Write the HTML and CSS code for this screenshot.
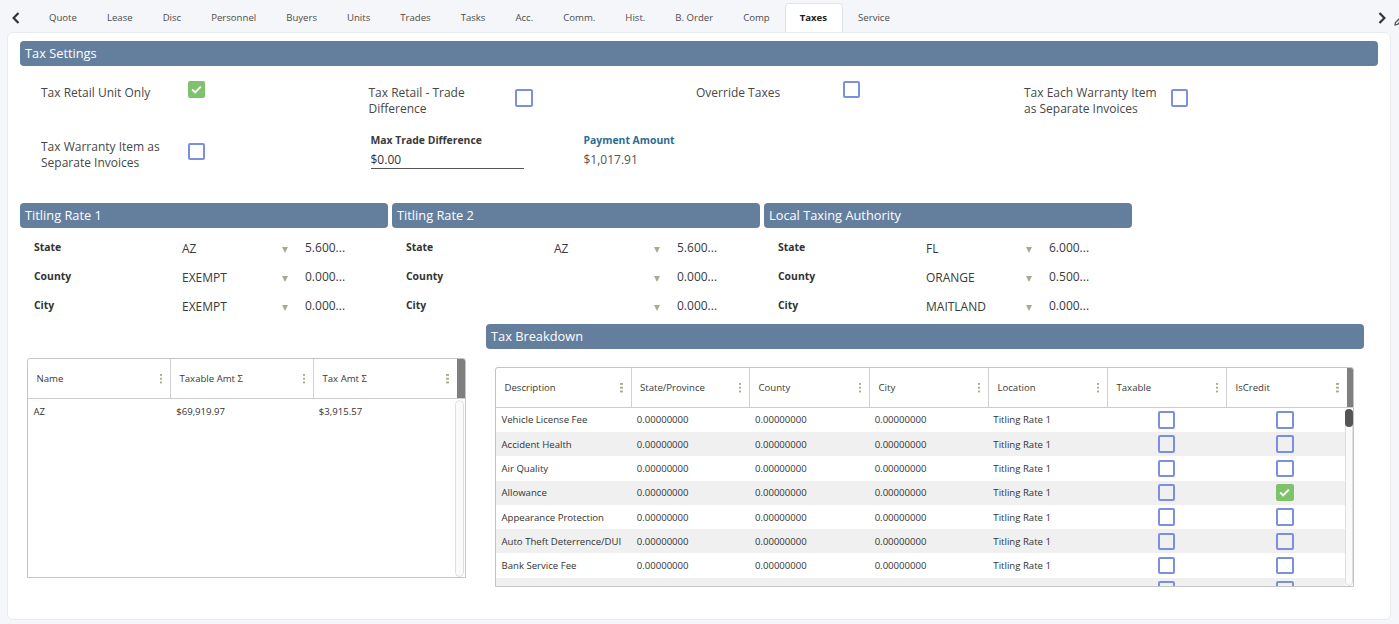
FILE: index.html
```html
<!DOCTYPE html>
<html>
<head>
<meta charset="utf-8">
<title>Taxes</title>
<link rel="stylesheet" href="styles.css">
</head>
<body>
<div class="page">
  <div class="tabbar">
    <div class="nav nav-left">
      <svg width="8" height="12" viewBox="0 0 8 12"><path d="M6.5 1 L1.6 6 L6.5 11" fill="none" stroke="#333" stroke-width="2.2"/></svg>
    </div>
    <div class="tabs">
      <div class="tab">Quote</div>
      <div class="tab">Lease</div>
      <div class="tab">Disc</div>
      <div class="tab">Personnel</div>
      <div class="tab">Buyers</div>
      <div class="tab">Units</div>
      <div class="tab">Trades</div>
      <div class="tab">Tasks</div>
      <div class="tab">Acc.</div>
      <div class="tab">Comm.</div>
      <div class="tab">Hist.</div>
      <div class="tab">B. Order</div>
      <div class="tab">Comp</div>
      <div class="tab active">Taxes</div>
      <div class="tab">Service</div>
    </div>
    <div class="nav nav-right">
      <svg class="chev" width="8" height="12" viewBox="0 0 8 12"><path d="M1.5 1 L6.4 6 L1.5 11" fill="none" stroke="#333" stroke-width="2.2"/></svg>
      <svg class="pencil" width="12" height="12" viewBox="0 0 12 12"><path d="M2 10 L2.5 7.5 L8 2 L10 4 L4.5 9.5 Z" fill="none" stroke="#555" stroke-width="1.3"/></svg>
    </div>
  </div>

  <div class="card">
    <div class="bar">Tax Settings</div>

    <div class="settings">
      <div class="setting">
        <div class="slabel">Tax Retail Unit Only</div>
        <span class="cb checked"><svg width="11" height="9" viewBox="0 0 11 9"><path d="M1.2 4.6 L4.2 7.4 L9.8 1.6" fill="none" stroke="#fff" stroke-width="2"/></svg></span>
      </div>
      <div class="setting">
        <div class="slabel">Tax Retail - Trade Difference</div>
        <span class="cb"></span>
      </div>
      <div class="setting">
        <div class="slabel">Override Taxes</div>
        <span class="cb"></span>
      </div>
      <div class="setting">
        <div class="slabel">Tax Each Warranty Item as Separate Invoices</div>
        <span class="cb"></span>
      </div>

      <div class="setting row2">
        <div class="slabel">Tax Warranty Item as Separate Invoices</div>
        <span class="cb"></span>
      </div>
      <div class="fields">
        <div class="field maxtrade">
          <div class="flabel">Max Trade Difference</div>
          <div class="finput">$0.00</div>
        </div>
        <div class="field">
          <div class="flabel blue">Payment Amount</div>
          <div class="fvalue">$1,017.91</div>
        </div>
      </div>
    </div>

    <div class="rates">
      <div class="rate">
        <div class="bar">Titling Rate 1</div>
        <div class="rrow"><span class="rl">State</span><span class="rv">AZ</span><span class="dd"></span><span class="rn">5.600...</span></div>
        <div class="rrow"><span class="rl">County</span><span class="rv">EXEMPT</span><span class="dd"></span><span class="rn">0.000...</span></div>
        <div class="rrow"><span class="rl">City</span><span class="rv">EXEMPT</span><span class="dd"></span><span class="rn">0.000...</span></div>
      </div>
      <div class="rate">
        <div class="bar">Titling Rate 2</div>
        <div class="rrow"><span class="rl">State</span><span class="rv">AZ</span><span class="dd"></span><span class="rn">5.600...</span></div>
        <div class="rrow"><span class="rl">County</span><span class="rv"></span><span class="dd"></span><span class="rn">0.000...</span></div>
        <div class="rrow"><span class="rl">City</span><span class="rv"></span><span class="dd"></span><span class="rn">0.000...</span></div>
      </div>
      <div class="rate">
        <div class="bar">Local Taxing Authority</div>
        <div class="rrow"><span class="rl">State</span><span class="rv">FL</span><span class="dd"></span><span class="rn">6.000...</span></div>
        <div class="rrow"><span class="rl">County</span><span class="rv">ORANGE</span><span class="dd"></span><span class="rn">0.500...</span></div>
        <div class="rrow"><span class="rl">City</span><span class="rv">MAITLAND</span><span class="dd"></span><span class="rn">0.000...</span></div>
      </div>
    </div>

    <div class="lower">
      <div class="leftcol">
        <div class="grid g-left">
          <div class="ghead">
            <div class="hc">Name<span class="kebab"></span></div>
            <div class="hc">Taxable Amt &Sigma;<span class="kebab"></span></div>
            <div class="hc">Tax Amt &Sigma;<span class="kebab"></span></div>
            <div class="hscroll"></div>
          </div>
          <div class="gbody">
            <div class="rows">
              <div class="row"><div class="c">AZ</div><div class="c">$69,919.97</div><div class="c">$3,915.57</div></div>
            </div>
            <div class="track"></div>
          </div>
        </div>
      </div>

      <div class="rightcol">
        <div class="bar">Tax Breakdown</div>
        <div class="grid g-right">
          <div class="ghead">
            <div class="hc">Description<span class="kebab"></span></div>
            <div class="hc">State/Province<span class="kebab"></span></div>
            <div class="hc">County<span class="kebab"></span></div>
            <div class="hc">City<span class="kebab"></span></div>
            <div class="hc">Location<span class="kebab"></span></div>
            <div class="hc">Taxable<span class="kebab"></span></div>
            <div class="hc">IsCredit<span class="kebab"></span></div>
            <div class="hscroll"></div>
          </div>
          <div class="gbody">
            <div class="rows">
              <div class="row"><div class="c">Vehicle License Fee</div><div class="c">0.00000000</div><div class="c">0.00000000</div><div class="c">0.00000000</div><div class="c">Titling Rate 1</div><div class="c ctr"><span class="cb"></span></div><div class="c ctr"><span class="cb"></span></div></div>
              <div class="row"><div class="c">Accident Health</div><div class="c">0.00000000</div><div class="c">0.00000000</div><div class="c">0.00000000</div><div class="c">Titling Rate 1</div><div class="c ctr"><span class="cb"></span></div><div class="c ctr"><span class="cb"></span></div></div>
              <div class="row"><div class="c">Air Quality</div><div class="c">0.00000000</div><div class="c">0.00000000</div><div class="c">0.00000000</div><div class="c">Titling Rate 1</div><div class="c ctr"><span class="cb"></span></div><div class="c ctr"><span class="cb"></span></div></div>
              <div class="row"><div class="c">Allowance</div><div class="c">0.00000000</div><div class="c">0.00000000</div><div class="c">0.00000000</div><div class="c">Titling Rate 1</div><div class="c ctr"><span class="cb"></span></div><div class="c ctr"><span class="cb checked"><svg width="11" height="9" viewBox="0 0 11 9"><path d="M1.2 4.6 L4.2 7.4 L9.8 1.6" fill="none" stroke="#fff" stroke-width="2"/></svg></span></div></div>
              <div class="row"><div class="c">Appearance Protection</div><div class="c">0.00000000</div><div class="c">0.00000000</div><div class="c">0.00000000</div><div class="c">Titling Rate 1</div><div class="c ctr"><span class="cb"></span></div><div class="c ctr"><span class="cb"></span></div></div>
              <div class="row"><div class="c">Auto Theft Deterrence/DUI</div><div class="c">0.00000000</div><div class="c">0.00000000</div><div class="c">0.00000000</div><div class="c">Titling Rate 1</div><div class="c ctr"><span class="cb"></span></div><div class="c ctr"><span class="cb"></span></div></div>
              <div class="row"><div class="c">Bank Service Fee</div><div class="c">0.00000000</div><div class="c">0.00000000</div><div class="c">0.00000000</div><div class="c">Titling Rate 1</div><div class="c ctr"><span class="cb"></span></div><div class="c ctr"><span class="cb"></span></div></div>
              <div class="row"><div class="c">Battery Fee</div><div class="c">0.00000000</div><div class="c">0.00000000</div><div class="c">0.00000000</div><div class="c">Titling Rate 1</div><div class="c ctr"><span class="cb"></span></div><div class="c ctr"><span class="cb"></span></div></div>
            </div>
            <div class="track"><div class="thumb"></div></div>
          </div>
        </div>
      </div>
    </div>
  </div>
</div>
</body>
</html>
```

FILE: styles.css
```css
* { box-sizing: border-box; }
html, body { margin: 0; padding: 0; }
body {
  width: 1399px;
  height: 624px;
  overflow: hidden;
  background: #f4f6f9;
  font-family: "Open Sans", "Liberation Sans", sans-serif;
  color: #444;
}
.page { width: 1399px; height: 624px; display: flex; flex-direction: column; }

/* tab bar */
.tabbar { height: 32px; display: flex; align-items: flex-end; flex-shrink: 0; }
.nav { height: 32px; display: flex; align-items: center; padding-top: 4px; flex-shrink: 0; }
.nav-left { width: 34px; padding-left: 12px; }
.nav-right { margin-left: auto; width: 21px; gap: 7px; }
.nav-right svg { flex-shrink: 0; }
.nav-right .pencil { margin-top: 5px; }
.tabs { display: flex; }
.tab {
  height: 29px;
  padding: 0 14px 1px;
  display: flex;
  align-items: center;
  font-size: 9.6px;
  color: #4d4d4d;
  border: 1px solid transparent;
  border-bottom: none;
  border-radius: 4px 4px 0 0;
}
.tab.active {
  background: #fff;
  border-color: #dfe3e8;
  font-weight: 700;
  color: #1e1e1e;
  padding-right: 15px;
}

/* card */
.card {
  margin: 0 8px 0 7px;
  height: 588px;
  background: #fff;
  border: 1px solid #e8ecf0;
  border-radius: 6px;
  padding: 8px 12px 0 12px;
}
.bar {
  height: 25px;
  background: #647e9e;
  color: #fff;
  border-radius: 4px;
  font-size: 12.8px;
  line-height: 25px;
  padding-left: 5px;
}

/* settings */
.settings {
  display: grid;
  grid-template-columns: 327.5px 327.5px 328px 327px;
  padding-left: 21px;
  margin-top: 18.5px;
  row-gap: 16px;
  align-items: start;
}
.setting { display: flex; align-items: center; }
.slabel {
  width: 142px;
  font-size: 12px;
  line-height: 16.3px;
  color: #474747;
}
.cb {
  display: inline-flex;
  align-items: center;
  justify-content: center;
  width: 17.5px;
  height: 17.5px;
  border: 2px solid #7b8fe0;
  border-radius: 2px;
  flex-shrink: 0;
}
.setting .cb { margin: -6px 0 0 4.5px; }
.cb.checked { background: #7ec36c; border-color: #7ec36c; }
.setting.row2 { margin-top: 6px; }
.setting.row2 .cb { margin-top: -7.5px; }
.fields { display: flex; padding-left: 2px; grid-column: span 2; }
.field { display: flex; flex-direction: column; }
.maxtrade { width: 153px; margin-right: 60px; }
.flabel { font-size: 10.4px; font-weight: 700; color: #3a3a3a; line-height: 14px; }
.flabel.blue { color: #2e6c94; }
.finput {
  margin-top: 5px;
  font-size: 12px;
  line-height: 16px;
  color: #333;
  border-bottom: 1px solid #555;
  height: 17px;
}
.fvalue { margin-top: 5px; font-size: 12px; line-height: 16px; color: #555; }

/* rates */
.rates { display: flex; gap: 4px; margin-top: 31px; }
.rate { width: 368px; }
.rate .bar { margin-bottom: 6px; }
.rrow {
  height: 29px;
  display: grid;
  grid-template-columns: 148px 100px 23px 1fr;
  align-items: center;
  padding-left: 14px;
}
.rl { font-size: 10.4px; font-weight: 700; color: #333; margin-top: -2px; }
.rv { font-size: 12px; color: #3a3a3a; }
.rn { font-size: 12px; color: #3a3a3a; margin-top: -2px; }
.dd {
  width: 0; height: 0;
  border-left: 3.5px solid transparent;
  border-right: 3.5px solid transparent;
  border-top: 6px solid #a8ab92;
  margin-top: 3px;
}

/* lower */
.lower { display: flex; margin-top: 3px; }
.leftcol { width: 446px; padding-left: 7px; padding-top: 34.5px; }
.rightcol { width: 878px; margin-left: 20px; }
.rightcol .g-right { margin-top: 18px; margin-left: 9px; }

.grid {
  border: 1px solid #c4c4c4;
  border-radius: 3px 3px 0 0;
  font-size: 9.6px;
  color: #333;
  overflow: hidden;
}
.ghead { display: flex; height: 40px; border-bottom: 1px solid #ccc; }
.hc {
  position: relative;
  display: flex;
  align-items: center;
  padding-left: 8.5px;
  border-right: 1px solid #d0d0d0;
  color: #3a3a3a;
}
.kebab {
  position: absolute;
  right: 8px;
  top: 14px;
  width: 2.5px;
  height: 11px;
  background: radial-gradient(circle, #a9ab93 1.1px, transparent 1.3px) 0 0 / 2.5px 3.8px repeat-y;
}
.hscroll { background: #7f7f7f; flex: 1; }
.gbody { display: flex; }
.rows { flex: 1; overflow: hidden; }
.row { display: flex; align-items: center; }
.c { padding-left: 5.5px; white-space: nowrap; overflow: hidden; }
.ctr { display: flex; justify-content: center; padding-left: 0; }
.track {
  border: 1px solid #dedede;
  border-radius: 5px;
  background: #fafafa;
  margin: 1px 0 1px;
  position: relative;
}

/* left grid */
.g-left { width: 438.5px; height: 220px; }
.g-left .hc { width: 143px; }
.g-left .hc:nth-child(3) { width: 142.5px; border-right: none; }
.g-left .gbody { height: 179px; }
.g-left .row { height: 24px; }
.g-left .c:nth-child(1), .g-left .c:nth-child(2) { width: 143px; }
.g-left .c:nth-child(3) { width: 142px; }
.g-left .track { width: 9px; margin-right: 0.5px; }

/* right grid */
.g-right { width: 859px; height: 220px; }
.g-right .hc:nth-child(1) { width: 135.5px; }
.g-right .hc:nth-child(2) { width: 118.5px; }
.g-right .hc:nth-child(3) { width: 120px; }
.g-right .hc:nth-child(4),
.g-right .hc:nth-child(5),
.g-right .hc:nth-child(6) { width: 119px; }
.g-right .hc:nth-child(7) { width: 119.5px; border-right: none; }
.g-right .gbody { height: 179px; }
.g-right .row { height: 24.3px; }
.g-right .row:nth-child(even) { background: #f0f0f0; }
.g-right .c:nth-child(1) { width: 135.5px; }
.g-right .c:nth-child(2) { width: 118.5px; }
.g-right .c:nth-child(3) { width: 120px; }
.g-right .c:nth-child(4),
.g-right .c:nth-child(5),
.g-right .c:nth-child(6) { width: 119px; }
.g-right .c:nth-child(7) { width: 119.5px; }
.g-right .c:nth-child(6) { padding-left: 1px; }
.g-right .track { width: 8.5px; }
.thumb {
  position: absolute;
  left: -1px; right: -1px; top: -1px;
  height: 18px;
  background: #555;
  border-radius: 5px;
}
```
